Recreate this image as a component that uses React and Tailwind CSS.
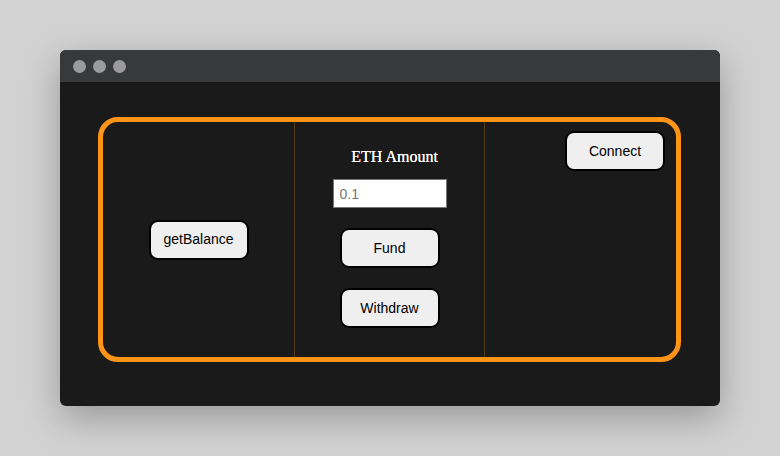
import React from "react";

const btn =
  "w-[100px] h-[40px] rounded-[9px] border-2 border-black bg-[#efefef] text-[14px] text-black font-['Liberation_Sans',Arial,sans-serif] flex items-center justify-center";

export default function App() {
  return (
    <div className="w-[780px] h-[456px] bg-[#d2d2d2] flex items-center justify-center font-['Liberation_Sans',Arial,sans-serif]">
      <div className="w-[660px] h-[356px] rounded-[6px] overflow-hidden bg-[#1a1a1a] shadow-[0_12px_36px_rgba(0,0,0,0.28)] flex flex-col">
        <div className="h-[32px] bg-[#38393b] flex items-center pl-[13px] gap-[7px]">
          <div className="w-[13px] h-[13px] rounded-full bg-[#9b9b9d]" />
          <div className="w-[13px] h-[13px] rounded-full bg-[#9b9b9d]" />
          <div className="w-[13px] h-[13px] rounded-full bg-[#9b9b9d]" />
        </div>
        <div className="flex-1 pl-[38px] pr-[39px] pt-[35px] pb-[44px]">
          <div className="w-full h-full rounded-[20px] border-[5px] border-[#ff9417] grid grid-cols-3">
            <div className="flex items-center justify-center">
              <button className={btn}>getBalance</button>
            </div>
            <div className="border-x border-[#553a18] flex flex-col items-center">
              <div className="mt-[26px] h-[18px] leading-[18px] text-[16px] text-white pl-[10px] font-['Liberation_Serif','Times_New_Roman',serif] [text-shadow:0_0_0.4px_#fff]">
                ETH Amount
              </div>
              <input
                className="mt-[13px] w-[114px] h-[29px] bg-white border border-[#767676] px-[6px] text-[14px] text-black placeholder:text-[#757575] outline-none"
                placeholder="0.1"
              />
              <button className={btn + " mt-[20px]"}>Fund</button>
              <button className={btn + " mt-[20px]"}>Withdraw</button>
            </div>
            <div className="flex justify-end items-start pt-[9px] pr-[11px]">
              <button className={btn}>Connect</button>
            </div>
          </div>
        </div>
      </div>
    </div>
  );
}
